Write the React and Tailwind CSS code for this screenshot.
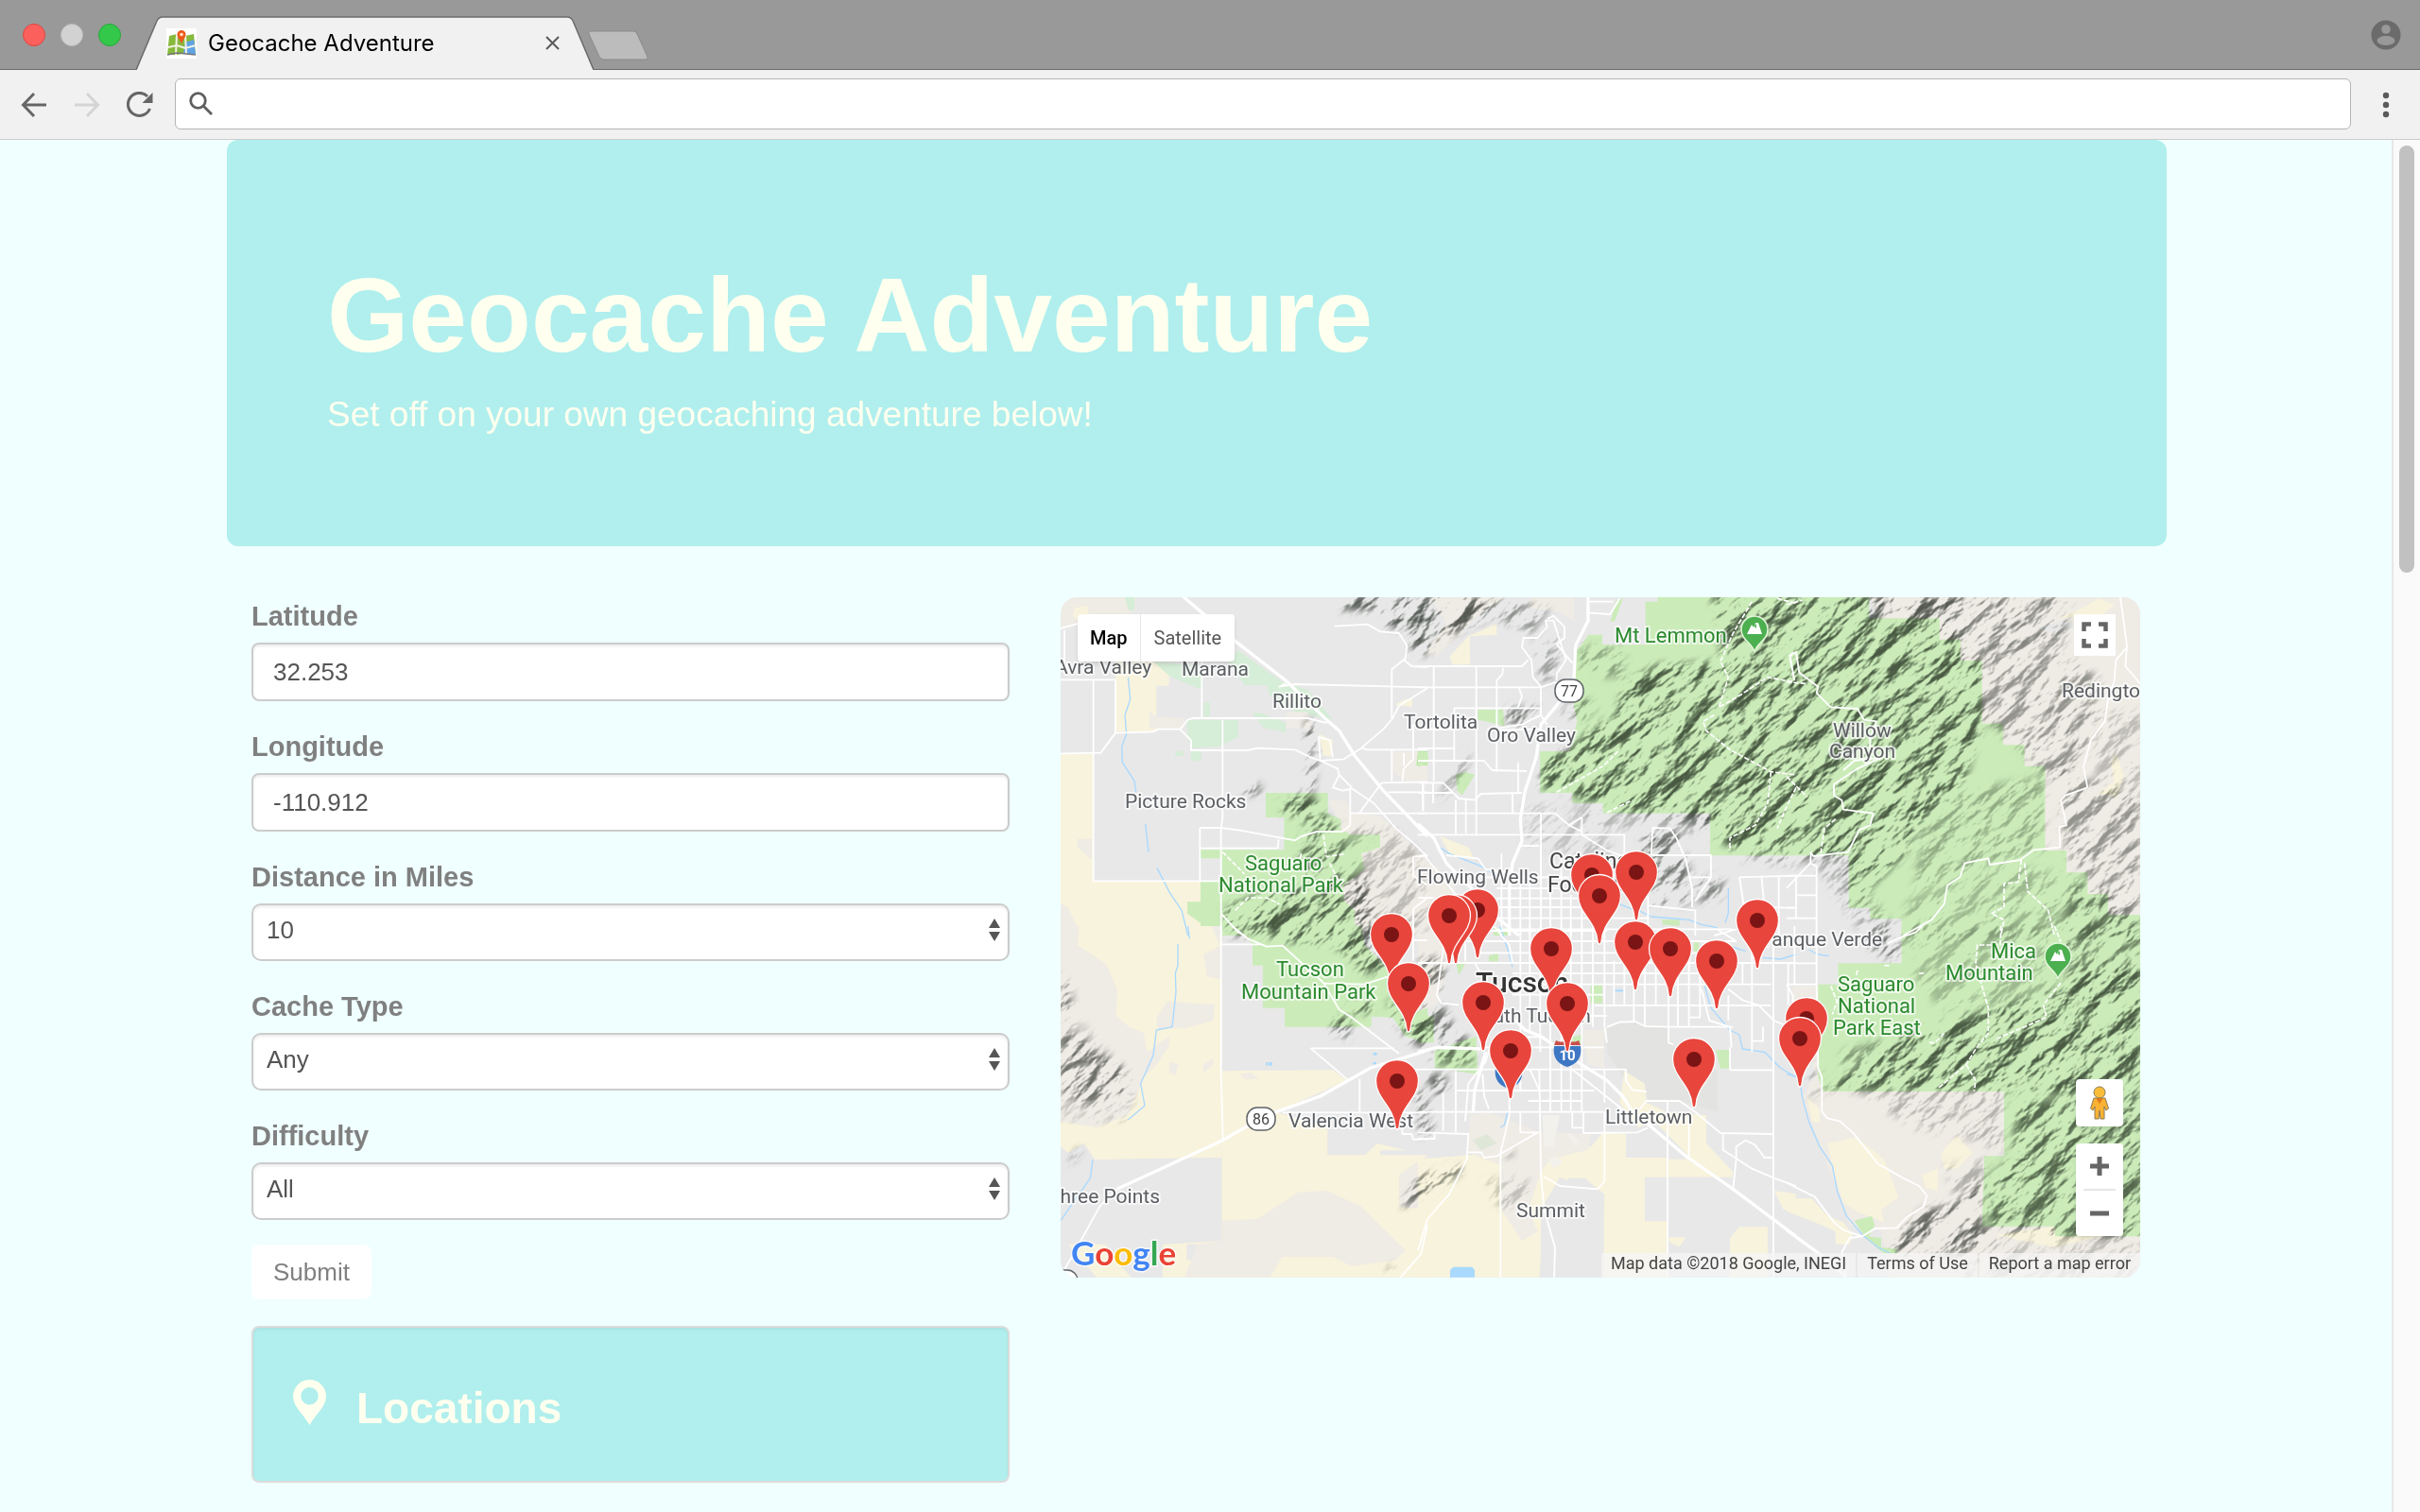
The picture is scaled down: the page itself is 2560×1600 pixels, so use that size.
import React from "react";

const GREY = "#e8e8e8";
const SAND = "#efebe5";
const CROP = "#f8f3dc";
const PARK = "#cbecb9";
const LEAF = "#d6edd7";
const LAKE = "#a9d9ff";

/* Terrain tiles: each has its own origin on the map and a grid of 3 units per pixel. */
const TILES = [
  {
    x: -12,
    y: -12,
    areas: [
      [SAND, "36,36 275,36 275,80 180,110 36,135"],
      [CROP, "80,70 120,62 125,90 90,110 75,95"],
      [LEAF, "240,36 272,36 270,80 250,75"],
      [CROP, "210,240 335,240 380,275 380,317 340,317 340,462 210,462"],
      [CROP, "36,533 140,533 140,938 480,938 480,1110 36,1110"],
      [SAND, "90,803 135,803 135,870 90,830"],
      [SAND, "36,1010 60,1020 100,1110 36,1110"],
      [SAND, "318,400 340,415 430,420 430,455 318,452"],
      [LEAF, "330,240 480,255 490,325 470,325 380,285"],
      [LEAF, "600,205 740,305 820,330 900,425 780,400 700,350 690,315 620,315 570,240"],
      [LEAF, "435,425 600,425 600,480 540,510 450,515 440,480"],
      [LEAF, "645,405 670,402 750,435 750,465 680,450"],
      [LEAF, "490,370 510,370 510,415 490,415"],
      [LEAF, "400,525 425,525 425,540 400,540"],
      [LEAF, "450,525 482,525 482,555 450,555"],
      [SAND, "752,400 820,400 830,430 830,455 752,450"],
      [CROP, "855,470 900,490 895,540 870,540"],
      [CROP, "1100,375 1130,360 1152,360 1152,383 1100,378"],
      [SAND, "1090,525 1200,525 1200,620 1130,620 1090,590"],
      ["#b9e8a6", "1170,525 1200,525 1200,570 1165,570"],
      [SAND, "884,680 940,680 960,720 1050,730 1200,870 1200,1110 930,1110 925,760"],
      [
        PARK,
        "687,657 884,657 884,723 925,740 925,775 960,790 1050,790 1050,830 990,850 1000,900 935,950 935,1000 970,1030 970,1110 480,1110 480,1070 438,1040 438,1003 480,1003 480,938 545,938 545,865 480,865 480,838 678,838 745,838 745,735 687,735",
      ],
    ],
    hills: [
      [1, "915,30 1210,30 1210,190 1160,190 1130,140 1070,125 1060,80 920,75"],
      [0.8, "1140,150 1210,170 1210,220 1150,215"],
      [1, "812,428 850,428 848,560 835,660 800,630 828,580"],
      [1, "615,645 670,625 668,660 620,662"],
      [1, "730,670 830,660 870,720 925,790 925,800 830,750 740,720"],
      [0.8, "800,760 920,770 960,860 930,950 860,960 790,880"],
      [1, "560,1110 560,1020 650,985 740,960 860,950 1010,910 1040,1110"],
      [0.35, "930,760 1100,770 1200,880 1200,1110 970,1110"],
    ],
    roads: [
      "36,298 210,298", "140,298 140,937 545,937", "210,298 210,465",
      "36,532 163,530 210,467 330,463 345,455 415,455 440,425 455,420 820,420 880,435",
      "415,455 450,490 450,522 630,522 660,515 780,520 830,545 860,555 935,550 990,515 1060,455 1090,420 1110,380 1200,325",
      "484,240 484,420", "550,425 550,735 545,770 545,1110",
      "478,768 545,768 600,775 780,808 800,795 850,780 930,780 955,760 955,645 930,650 900,640 920,600 915,580 860,555 855,480 890,490 900,545",
      "478,768 478,937", "478,833 725,833 728,805", "750,310 730,320 780,312 1200,322",
      "905,128 1010,122 1050,145 1110,150 1135,190 1130,230 1087,265 1087,420",
      "1125,235 1150,255 1200,258", "990,515 1010,520 1200,520", "1087,520 1087,620",
      "1155,440 1155,550 1125,580 1120,620", "1125,530 1125,570", "955,722 1200,722", "985,720 1055,625 1200,622",
      "1075,655 1200,655", "955,640 1030,690 1100,770 1160,820 1200,860", "920,600 960,640",
      "1187,625 1187,715", "1155,860 1155,920 1200,950", "1200,990 1155,1025 1155,1110", "48,140 48,240",
      "36,135 90,120", "545,1040 600,1100 620,1110", "1155,860 1200,855",
    ],
    highways: ["420,30 520,115 590,175 750,300 880,425 920,460 970,540 1060,650 1200,795"],
    trails: ["550,845 620,915", "590,1030 630,990 690,990 730,1010", "870,790 880,860 940,850", "890,880 920,940", "800,850 790,880"],
    rivers: ["250,290 257,360 240,410 245,470 230,510 232,560 270,620 275,655", "305,755 315,845", "342,895 380,970 420,1030 440,1110"],
  },
  {
    x: 378,
    y: -12,
    areas: [
      [SAND, "40,36 270,36 250,60 180,100 130,160 60,220 20,220 90,120"],
      [CROP, "100,225 160,160 250,120 250,155 165,160 165,250 110,250"],
      [SAND, "360,36 495,36 495,110 440,80 350,70"],
      [
        PARK,
        "722,50 760,50 760,36 1200,36 1200,856 927,856 927,722 587,722 587,690 490,690 490,657 387,657 387,525 480,525 505,430 495,380 495,210 520,187 540,155 585,155 585,187 722,187",
      ],
      [PARK, "630,45 650,40 625,110 610,115"],
      [PARK, "190,393 270,393 275,445 215,430 190,425"],
      [PARK, "120,600 150,590 180,600 140,665 125,650"],
      [PARK, "0,528 30,528 35,560 0,575"],
      [CROP, "70,795 160,830 180,870 100,850"],
      [SAND, "0,870 60,890 120,960 0,1110"],
      [PARK, "775,1060 830,1060 830,1080 775,1075"],
      [PARK, "240,1085 300,1090 290,1110 240,1110"],
    ],
    hills: [
      [1, "-10,30 200,30 250,90 140,140 60,180 20,210 -10,150"],
      [0.6, "180,30 420,70 360,150 240,100"],
      [0.5, "370,150 450,160 440,290 390,310"],
      [0.5, "510,190 660,195 650,290 520,290"],
      [0.7, "450,400 520,350 570,380 520,430"],
      [0.8, "280,385 390,385 370,440 280,445"],
      [1, "660,300 760,250 960,240 960,150 930,30 1210,30 1210,860 1000,840 900,760 700,720 560,690 480,660 390,640 390,540 480,520 560,440 620,420"],
      [0.35, "490,690 900,720 920,800 700,770 560,770"],
      [0.8, "720,780 830,780 870,930 860,1010 740,1010 680,900"],
      [0.7, "890,930 970,920 970,990 890,1010"],
      [0.25, "330,680 580,730 640,900 340,820"],
      [0.5, "120,550 165,520 150,600 60,690"],
      [0.5, "1010,840 1210,850 1210,890 1020,870"],
    ],
    roads: [
      "0,255 330,255 350,235", "0,322 390,322 440,305", "115,388 390,388", "50,255 50,620", "0,516 115,516",
      "115,388 115,555", "0,455 110,455", "0,555 210,555 235,585 345,588", "185,255 185,715", "270,260 268,280 250,300 250,590",
      "0,625 80,625 130,675 180,680 200,660 330,657", "0,657 110,657", "0,722 435,722 480,760 520,735",
      "0,790 655,790 655,860", "120,680 120,790", "152,680 152,785", "185,715 185,790", "318,560 318,657",
      "300,657 300,722", "15,625 15,715", "48,625 48,690",
      "440,300 440,280 470,235 430,110 405,110 410,130 380,165 335,165 330,195 360,235 365,290 390,320",
      "410,105 430,95 465,130 465,165 440,185 490,245", "545,50 620,50", "540,85 610,90 640,40",
      "220,457 330,440 390,410 410,440", "390,322 390,410", "250,457 390,455", "320,322 330,350 318,385", "90,855 190,865 215,900 290,910",
      "325,825 385,825", "390,722 390,1110", "520,735 520,790 600,840 655,860", "480,760 520,780",
      "655,860 655,960 730,985", "740,855 745,768 800,770 820,800 850,870 870,960 870,1020", "740,855 930,855 930,925 860,925",
      "1020,925 1200,920", "1020,925 1035,1020 1200,1022", "1090,920 1100,1020", "1145,920 1145,1110", "730,985 730,1110",
      "880,1110 880,1030 730,1015", "880,1000 930,925", "250,1020 600,1020", "250,992 600,992", "250,1055 730,1055", "250,960 450,960",
      "200,925 480,925", "325,950 325,1110", "355,920 355,1110", "420,950 420,1110", "455,860 455,1110", "485,980 485,1110",
      "520,980 520,1110", "250,1090 1000,1090", "1010,1090 940,1110", "0,860 20,855 200,1080", "265,850 265,1110", "0,990 50,990",
    ],
    highways: [
      "540,30 540,110 500,190 495,300 440,380 390,440 375,545 340,650 325,740 330,810 300,880 290,960 290,1110",
      "0,755 50,800 90,880 200,990 260,1060 320,1110",
    ],
    trails: [
      "1060,50 1000,150 960,240 985,290 955,385 1010,355 1110,290 1190,305", "940,410 905,430 915,460 990,520 1120,590 1200,600",
      "1120,590 1110,690 1070,760 990,800 990,840", "440,655 520,610 590,570 640,520", "600,720 680,680",
      "1200,640 1170,700 1140,770", "1190,210 1180,230 1195,300", "1140,40 1200,55",
    ],
    rivers: ["60,825 100,850 200,890 250,920", "700,1030 740,1050 860,1060 900,1075 950,1085", "985,960 985,1040 975,1070", "640,1010 700,1035"],
  },
  {
    x: 768,
    y: -12,
    areas: [
      [SAND, "262,36 1122,36 1122,1110 800,1110 600,840 400,300"],
      [CROP, "870,100 940,70 990,40 1040,60 990,100"],
      [CROP, "1030,560 1045,530 1070,600 1050,670 990,660 1040,620"],
      [GREY, "790,135 880,110 930,130 850,150"],
      [
        PARK,
        "0,36 262,36 262,103 485,103 485,170 552,170 552,237 620,237 620,437 687,437 687,505 755,505 755,572 820,572 820,840 888,840 888,910 955,910 955,978 1020,978 1020,1045 1122,1045 1122,1110 365,1110 365,1057 265,1057 265,1022 197,1022 197,856 0,856",
      ],
    ],
    hills: [
      [1, "-10,30 560,30 560,170 620,250 620,440 560,640 430,740 380,850 200,1020 190,860 -10,860"],
      [0.7, "250,30 900,30 880,190 640,200 500,160"],
      [0.6, "540,180 860,200 1000,300 960,500 900,640 820,600 690,480 620,420"],
      [0.45, "430,740 560,650 820,600 820,840 640,880 400,980"],
      [0.6, "850,570 1122,680 1122,1045 1020,1000 890,860 860,700"],
      [0.35, "980,400 1130,400 1130,700 980,640"],
      [0.35, "380,1000 700,880 900,920 1130,1060 1130,1120 370,1120"],
      [0.7, "900,930 1060,1000 1120,1060 1120,1120 880,1120"],
      [0.4, "0,850 190,860 360,1110 240,1110 100,900"],
    ],
    roads: [
      "1058,30 1068,100 1080,190 1075,255 1122,310",
      "1080,195 1045,235 1040,300 1020,360 1010,430 965,490 942,575 955,640 885,665 870,680 888,760 865,765 868,830 785,838 740,870 645,885 640,865 565,880 550,925 510,950 500,1010 460,1060 370,1110",
      "25,300 10,220 30,210 40,275 100,320 95,340 140,385 225,390 245,425 285,430 265,480 265,520",
      "180,585 215,555 300,545 225,580 150,630 150,665 175,680 180,710 275,722 265,760 230,775 195,845 85,858 75,845",
      "0,920 95,920", "30,925 30,1055", "30,982 95,982", "0,1022 28,1022", "0,1055 95,1055", "78,845 75,880 95,890 95,1110", "0,960 75,880",
    ],
    highways: [],
    trails: [
      "0,305 60,310", "155,740 120,770 108,850", "745,870 735,940 690,945 690,1020 650,1040 690,1060 680,1110",
      "755,880 765,970 830,1030 850,1110", "0,605 65,670", "0,60 50,45",
    ],
    rivers: [],
  },
  {
    x: -12,
    y: 348,
    areas: [
      [CROP, "36,0 548,0 548,735 145,742 36,740"],
      [SAND, "36,0 95,0 90,60 180,120 215,200 212,285 265,330 260,400 300,480 250,600 150,640 36,620"],
      [SAND, "340,290 375,240 525,250 520,300 430,325 345,325"],
      [SAND, "260,320 300,340 310,400 380,350 380,380 340,440 290,490 250,440"],
      [SAND, "490,90 548,60 548,170 500,160"],
      [SAND, "515,0 548,0 540,60"],
      [SAND, "380,430 410,440 400,475 380,465"],
      [SAND, "490,440 520,420 520,440 490,465"],
      [GREY, "36,700 60,720 110,690 145,742 548,735 548,1010 36,1010"],
      [CROP, "60,1010 180,1010 200,1050 260,1115 150,1115"],
      [CROP, "548,460 900,457 945,490 720,590 883,640 883,727 1002,727 1040,690 1200,727 1200,1115 360,1115 360,1010 548,1000"],
      [GREY, "436,1010 468,1010 468,1060 436,1060"],
      [SAND, "548,935 660,930 790,845 880,840 990,890 1060,960 1130,1030 1100,1060 960,1080 900,1050 740,1050 700,1115 430,1115 470,1010 548,1000"],
      [SAND, "1110,790 1200,727 1200,900 1110,890"],
      [SAND, "605,470 640,465 665,485 620,485"],
      [PARK, "555,0 990,0 1000,60 1070,130 1120,190 1200,260 1200,370 1130,350 1090,290 1022,287 1022,320 747,320 747,260 678,260 678,125 645,125 645,57 610,20"],
      [LAKE, "688,432 694,432 694,443 688,443"],
      [LAKE, "697,432 707,432 707,443 697,443"],
      [LAKE, "1028,402 1040,402 1040,410 1028,410"],
      [LAKE, "1028,432 1038,432 1038,439 1028,439"],
      [GREY, "1050,712 1200,712 1200,727 1050,727"],
    ],
    hills: [
      [0.8, "30,340 100,350 150,400 240,450 265,560 200,540 130,570 60,540 30,520"],
      [0.8, "30,150 70,180 75,300 30,290"],
      [0.25, "30,300 100,300 260,480 260,620 30,620"],
      [1, "640,0 1010,0 1060,110 980,120 900,60 740,50"],
      [1, "900,290 960,280 950,360 900,340"],
      [1, "960,240 1025,230 1020,280 950,270"],
      [1, "1070,230 1120,260 1200,280 1200,380 1150,370 1100,310"],
      [0.9, "950,50 1030,60 1080,150 980,150"],
      [1, "1120,900 1200,850 1200,770 1140,840"],
      [0.8, "65,765 80,710 105,710"],
      [0.9, "1165,520 1200,530 1200,680 1180,660"],
      [0.5, "1060,1080 1090,1070 1090,1095 1070,1095"],
    ],
    roads: [
      "545,0 545,460 551,680", "548,58 670,58", "580,0 630,40 690,65 740,62 870,180 920,265 960,290 1110,405", "830,388 1095,388",
      "830,388 950,490", "985,485 985,590", "740,592 1200,592", "215,835 160,890 105,990 60,1070 36,1110",
      "1200,950 1180,1040 1115,1115", "870,182 1000,185 1075,160", "1155,0 1155,110", "1155,45 1200,45", "1120,660 1150,660 1155,677 1200,677",
      "1155,455 1200,455", "1120,610 1120,660",
    ],
    highways: ["1200,395 1020,450 860,540 720,590 620,640 550,680 410,745 215,835"],
    trails: [],
    rivers: ["440,0 445,40", "408,58 408,125 400,150 402,210 390,320 340,330 330,410 290,500 303,570 250,615", "138,742 130,800 36,935"],
  },
  {
    x: 378,
    y: 348,
    areas: [
      [SAND, "0,0 90,0 100,90 60,250 0,270"],
      ["#e3e3e1", "600,330 640,305 690,305 720,320 795,320 795,370 830,400 950,460 950,590 830,555 730,555 720,515 650,480 600,400"],
      [SAND, "520,330 592,330 592,450 540,440"],
      [CROP, "655,460 720,500 725,560 790,590 915,600 915,690 1000,780 1000,830 870,740 750,620 700,640 640,560"],
      [CROP, "0,740 160,727 265,727 265,1115 0,1115"],
      [CROP, "265,727 400,690 550,700 590,650 660,660 660,735 790,735 790,1115 590,1115 590,850 530,800 480,800 400,900 385,1115 265,1115"],
      [CROP, "790,740 860,740 1000,830 980,797 790,797"],
      [SAND, "165,600 220,590 390,655 550,660 540,710 420,740 390,780 350,900 380,970 330,1000 265,900 265,760 160,720"],
      ["#f3f1ec", "395,600 450,600 430,700 400,700"],
      ["#f3f1ec", "470,650 510,680 500,700"],
      ["#f3f1ec", "415,740 440,730 460,750 430,770"],
      ["#dfe7d9", "175,680 220,660 250,690 200,712"],
      [GREY, "720,797 1125,797 1125,1115 790,1115 790,937 720,937"],
      [GREY, "390,900 450,797 590,850 590,1115 390,1115"],
      [CROP, "990,990 1020,955 1110,955 1110,1115 990,1115"],
      [CROP, "795,988 850,988 830,1018 800,1005"],
      [CROP, "1130,840 1200,850 1190,905 1160,900"],
      [PARK, "53,395 185,350 190,470 53,450"],
      [PARK, "0,270 50,290 50,370 0,370"],
      [PARK, "548,187 585,187 585,245 548,245"],
      [PARK, "945,393 990,393 990,452 960,452"],
      [PARK, "120,120 150,120 130,155"],
      [PARK, "490,350 520,345 520,375 490,375"],
      [PARK, "225,95 255,85 255,112 225,112"],
      [PARK, "875,52 892,52 892,80 875,80"],
      [LAKE, "102,1092 112,1082 172,1082 180,1092 180,1115 102,1115"],
      [LAKE, "626,202 652,202 652,208 626,208"],
    ],
    hills: [
      [0.8, "0,100 70,100 90,160 60,220 120,330 190,380 170,440 60,440 0,380"],
      [1, "0,815 60,780 130,755 140,780 60,830 0,860"],
      [0.9, "20,470 90,470 95,545 50,530"],
      [0.8, "0,600 50,620 40,670 10,660"],
      [0.7, "265,715 300,705 300,730 270,730"],
      [0.3, "200,800 350,800 350,900 260,900"],
    ],
    roads: [
      "150,15 600,15", "150,48 1010,48", "190,85 1000,85", "0,117 1200,117", "300,150 900,150", "270,185 1120,185", "300,218 590,218",
      "560,252 1120,252", "520,285 600,285", "795,320 1000,320", "300,352 400,352", "200,385 590,385", "325,0 325,350", "355,0 355,340",
      "388,0 388,400", "420,0 420,590", "455,0 455,590", "485,0 485,590", "520,0 520,590", "555,0 555,320", "592,0 592,320 600,370",
      "622,110 622,250", "655,0 655,250", "685,117 685,300", "720,0 720,315", "755,110 755,252", "795,117 795,370 810,375", "825,117 825,320",
      "860,50 860,320", "895,117 895,290 860,290", "1030,117 1030,185", "1060,85 1060,400", "1175,117 1175,250",
      "0,590 590,590", "20,455 660,455 660,490 680,520 725,525", "120,522 560,522", "350,555 520,555", "120,460 120,655",
      "80,530 80,650", "0,655 160,660 155,740 100,850 30,930 0,1030", "53,660 53,675 0,675", "150,620 160,500 215,430 230,380",
      "290,550 290,600 262,720 262,1115", "385,455 390,780 400,900 435,1020 432,1115", "160,718 200,718 210,735 250,730 380,655", "325,590 325,655 385,655",
      "490,590 490,640 525,640", "525,590 525,657 695,655 730,640", "592,590 592,810 570,835 450,825 400,795", "592,455 592,560",
      "355,455 385,520", "325,455 325,520", "205,470 210,540 225,580", "792,680 792,1115", "1128,0 1128,1115",
      "490,455 660,590 700,585 725,555 830,555 880,590 960,657 1125,660", "860,600 860,735", "792,555 792,680",
      "968,660 968,710 1060,770 1130,800 1200,825", "1000,835 1010,740 1010,700 1040,680 1070,695 1100,735 1128,735",
      "985,200 1030,235 1080,250 1130,300 1200,330", "990,457 1128,457", "990,385 990,457", "1095,320 1095,365 1060,365", "90,0 60,220 75,245 130,250",
      "240,0 290,60 300,117", "600,320 640,305 690,303 720,318 795,320", "900,200 925,300 990,320 995,385", "950,10 1010,48", "985,220 985,300",
      "180,117 230,200", "150,20 150,110",
    ],
    highways: [
      "270,260 340,330 390,350 520,440 600,490 650,540 680,590 720,620 850,730 1000,835 1200,985",
      "0,400 60,385 210,390", "215,400 180,520 175,590",
    ],
    trails: [],
    rivers: [
      "930,260 990,330 1020,345 1030,390 1100,400 1150,450 1200,480", "910,190 930,260", "260,0 290,90 300,130", "285,590 275,630 262,640",
      "1095,100 1150,105 1200,90", "980,60 1040,80",
    ],
  },
  {
    x: 768,
    y: 348,
    areas: [
      [SAND, "20,190 100,190 115,525 690,525 690,730 628,730 620,953 852,953 852,985 1122,985 1122,1115 330,1115 300,960 200,950 50,545 90,470 20,250"],
      [CROP, "130,690 220,670 310,740 355,860 300,900 310,940 230,910 180,880 150,780"],
      [CROP, "490,720 540,665 590,720 540,770 500,770"],
      [CROP, "430,790 480,770 480,840 440,830"],
      [CROP, "660,980 850,953 1000,985 850,1020"],
      [CROP, "65,545 105,580 105,625 80,620"],
      [CROP, "0,865 80,865 130,920 180,940 210,980 200,1010 155,1010 155,970 100,945 0,905"],
      [PARK, "365,0 1122,0 1122,985 852,985 852,953 620,953 628,730 690,730 690,525 115,525 100,480 100,185 163,185 163,118 365,118"],
      [PARK, "215,935 270,920 280,950 260,985 300,990 300,1020 350,1025 350,1040 310,1040 250,990"],
    ],
    hills: [
      [0.8, "280,0 370,0 360,120 240,60"],
      [0.35, "370,0 900,0 850,300 500,280 400,150"],
      [1, "110,520 250,430 400,330 640,270 870,200 960,130 1130,100 1130,500 960,540 690,525"],
      [0.7, "850,0 1130,0 1130,140 900,200"],
      [0.9, "720,560 1130,520 1130,990 850,985 640,940 640,800 720,730"],
      [0.4, "230,530 690,530 690,720 600,680 400,640"],
      [0.6, "170,400 400,330 300,430 170,440"],
      [0.9, "430,900 540,880 620,800 620,953 780,960 620,1010 560,1040 330,1040 350,980"],
      [0.4, "500,760 640,740 620,860 540,880"],
      [0.3, "560,1000 1130,990 1130,1120 560,1120"],
      [0.3, "60,440 110,430 110,540 60,540"],
    ],
    roads: [
      "95,0 95,185 100,450 112,480 112,590 130,610 170,620 210,655 290,755 370,800 420,825 445,855 435,890 380,925 350,958 280,960 240,985 180,965 150,940 90,860 0,815",
      "0,118 95,118", "25,0 25,185", "0,185 95,185", "190,1115 175,1035 200,990 240,985", "320,55 365,35 410,20 430,0", "0,185 20,220 20,260",
    ],
    highways: ["0,965 110,1045 190,1115"],
    trails: [
      "650,60 605,60 600,120 640,260 640,340 600,390 570,440 480,515", "870,180 815,250 825,290 660,360", "570,440 600,490 595,525",
      "680,0 678,60", "850,0 870,50", "225,140 220,160", "500,340 470,370 450,370", "310,125 330,125", "140,190 160,240 145,280", "420,150 440,150",
    ],
    rivers: [
      "0,470 40,480 50,545 70,620 105,700 145,760 160,840 190,920 240,980 290,1020 330,1040", "70,75 100,90 135,95",
    ],
  },
];

const PLACES = [
  ["Avra Valley", -6, 81],
  ["Marana", 128, 83],
  ["Rillito", 224, 117],
  ["Tortolita", 363, 139],
  ["Oro Valley", 451, 153],
  ["Picture Rocks", 68, 223],
  ["Flowing Wells", 377, 303],
  ["Willow", 817, 148],
  ["Canyon", 813, 170],
  ["Redington", 1059, 106],
  ["Tanque Verde", 741, 369],
  ["South Tucson", 433, 450],
  ["Valencia West", 241, 561],
  ["Littletown", 576, 557],
  ["Three Points", -13, 641],
  ["Summit", 482, 656],
];

const PARKS = [
  ["Saguaro", 195, 289],
  ["National Park", 167, 312],
  ["Tucson", 228, 401],
  ["Mountain Park", 191, 425],
  ["Mt Lemmon", 586, 48],
  ["Mica", 984, 382],
  ["Mountain", 936, 405],
  ["Saguaro", 822, 417],
  ["National", 822, 440],
  ["Park East", 817, 463],
];

const PINS = [
  [609, 291], [562, 294], [570, 316], [441, 331], [418, 337], [411, 337], [737, 342], [350, 357], [608, 365],
  [519, 372], [645, 372], [694, 385], [368, 409], [447, 429], [536, 430], [789, 446], [782, 467], [476, 480],
  [670, 489], [356, 512],
];

const Lines = ({ items, ...rest }) =>
  items.map((p) => <polyline key={p} points={p} fill="none" strokeLinejoin="round" {...rest} />);

function Peak({ x, y }) {
  return (
    <g transform={`translate(${x} ${y})`}>
      <path d="M0 24C-2 14-14 12-14 0A14 14 0 0 1 14 0C14 12 2 14 0 24Z" fill="#4caf50" stroke="#e3f5da" strokeWidth="1.5" />
      <path d="M-8 5-3-5-1-2 1-7 4-7 8 5Z" fill="#fff" />
      <path d="M1-7 0-3 2-1 2-4Z" fill="#4caf50" />
    </g>
  );
}

function RouteSign({ x, y, n }) {
  return (
    <g transform={`translate(${x} ${y})`}>
      <rect x="-15" y="-12" width="30" height="24" rx="11" fill="#fff" stroke="#5f6368" strokeWidth="1.5" />
      <text y="6" textAnchor="middle" fontSize="16" fill="#444">{n}</text>
    </g>
  );
}

function Interstate({ x, y }) {
  return (
    <g transform={`translate(${x} ${y})`}>
      <path d="M-12-14Q-6-11 0-14Q6-11 12-14L14-9H-14Z" fill="#c8504c" />
      <path d="M-14-8H14C16 4 10 11 0 14C-10 11-16 4-14-8Z" fill="#3e78c4" />
      <text y="7" textAnchor="middle" fontSize="15" fontWeight="700" fill="#fff">10</text>
    </g>
  );
}

function Pin({ x, y }) {
  return (
    <g transform={`translate(${x} ${y})`}>
      <path
        d="M0 51C-1.6 51-1.9 50-2 48C-3.5 27-22.500 18-22.500 0A22.500 22.500 0 0 1 22.500 0C22.500 18 3.500 27 2 48C1.900 50 1.600 51 0 51Z"
        fill="#e8453c"
        stroke="#fff"
        strokeWidth="1.3"
      />
      <circle r="8" fill="#7b1414" />
    </g>
  );
}

function Terrain() {
  return (
    <svg viewBox="0 0 1142 720" preserveAspectRatio="xMidYMid slice" className="absolute inset-0 h-full w-full" role="img" aria-label="Map of Tucson">
      <defs>
        <filter id="shade" x="0" y="0" width="100%" height="100%" colorInterpolationFilters="sRGB">
          <feTurbulence type="fractalNoise" baseFrequency="0.018 0.042" numOctaves="5" seed="11" />
          <feDiffuseLighting surfaceScale="15" diffuseConstant="1.3" lightingColor="#fff">
            <feDistantLight azimuth="265" elevation="50" />
          </feDiffuseLighting>
          <feComponentTransfer>
            <feFuncR type="table" tableValues="0.36 0.46 0.6 0.8 1" />
            <feFuncG type="table" tableValues="0.38 0.48 0.62 0.81 1" />
            <feFuncB type="table" tableValues="0.36 0.46 0.6 0.8 1" />
          </feComponentTransfer>
        </filter>
        <filter id="soft" x="-5%" y="-5%" width="110%" height="110%">
          <feGaussianBlur stdDeviation="4" />
        </filter>
        <mask id="relief" maskUnits="userSpaceOnUse" x="0" y="0" width="1142" height="720">
          <g filter="url(#soft)">
            {TILES.map((t) => (
              <g key={`${t.x} ${t.y}`} transform={`translate(${t.x} ${t.y}) scale(0.33333)`}>
                {t.hills.map(([o, p]) => <polygon key={p} points={p} fill="#fff" fillOpacity={o} />)}
              </g>
            ))}
          </g>
        </mask>
      </defs>
      <rect width="1142" height="720" fill={GREY} />
      {TILES.map((t) => (
        <g key={`${t.x} ${t.y}`} transform={`translate(${t.x} ${t.y}) scale(0.33333)`}>
          {t.areas.map(([c, p]) => <polygon key={p} points={p} fill={c} />)}
        </g>
      ))}
      <g mask="url(#relief)" style={{ mixBlendMode: "multiply" }}>
        <g transform="rotate(-42 571 360)">
          <rect x="-200" y="-400" width="1550" height="1500" filter="url(#shade)" />
        </g>
      </g>
      {TILES.map((t) => (
        <g key={`${t.x} ${t.y}`} transform={`translate(${t.x} ${t.y}) scale(0.33333)`}>
          <Lines items={t.rivers} stroke={LAKE} strokeWidth="4" />
          <Lines items={t.roads} stroke="#fff" strokeWidth="5.500" />
          <Lines items={t.trails} stroke="#fff" strokeWidth="5" strokeDasharray="16 6" />
          <Lines items={t.highways} stroke="#fff" strokeWidth="10" />
        </g>
      ))}
      <g fontFamily="Roboto, sans-serif" stroke="none">
        <RouteSign x={538} y={99} n="77" />
        <RouteSign x={212} y={552} n="86" />
        <RouteSign x={3} y={724} n="" />
        <Interstate x={536} y={483} />
        <Interstate x={474} y={506} />
        <g fontSize="21" fill="#5b5e62" stroke="#fff" strokeOpacity="0.7" strokeWidth="4" strokeLinejoin="round" paintOrder="stroke">
          {PLACES.map(([n, x, y]) => <text key={n} x={x} y={y}>{n}</text>)}
          <g fill="#444">
            <text x="517" y="287" fontSize="23">Catalina</text>
            <text x="515" y="312" fontSize="23">Foothills</text>
          </g>
          <g fill="#2b8a2f" fontSize="22">
            {PARKS.map(([n, x, y]) => <text key={`${n}${y}`} x={x} y={y}>{n}</text>)}
          </g>
          <text x="439" y="418" fontSize="30" fontWeight="500" fill="#333">Tucson</text>
        </g>
        <Peak x={734} y={34} />
        <Peak x={1055} y={380} />
      </g>
      {PINS.map(([x, y]) => <Pin key={`${x} ${y}`} x={x} y={y} />)}
    </svg>
  );
}

function MapPanel() {
  const footer = "flex h-full items-center bg-[#f5f5f5]/75 px-2.5 pb-1 text-[#444]";
  return (
    <section aria-label="Map" className="relative aspect-[1142/720] w-full overflow-hidden rounded-[18px] font-[Roboto,sans-serif]">
      <Terrain />
      <div className="absolute top-[18px] left-[18px] flex h-[50px] rounded-sm bg-white text-xl shadow-md">
        <button className="border-r border-gray-200 px-[13px] font-medium text-black">Map</button>
        <button className="px-[14px] text-[#565656]">Satellite</button>
      </div>
      <button aria-label="Toggle fullscreen view" className="absolute top-[18px] right-[26px] grid h-11 w-11 place-items-center bg-white">
        <svg width="28" height="28" viewBox="0 0 28 28" fill="none" stroke="#666" strokeWidth="4.500">
          <path d="M2.500 10V2.500H10M18 2.500H25.500V10M25.500 18V25.500H18M10 25.500H2.500V18" />
        </svg>
      </button>
      <div className="absolute right-[18px] bottom-11 flex w-[50px] flex-col gap-[18px]">
        <button aria-label="Street View" className="grid h-[50px] place-items-center rounded-sm bg-white shadow-md">
          <svg width="22" height="36" viewBox="0 0 22 36" stroke="#8a7a55" strokeWidth="1">
            <path d="M5 13H17L20.500 24 18 26 16 22V35H12L11 26 10 35H6V22L4 26 1.500 24Z" fill="#f9b233" />
            <path d="M7 13H15L11 19Z" fill="#e27a1e" stroke="none" />
            <circle cx="11" cy="7" r="6" fill="#f9bd3a" />
          </svg>
        </button>
        <div className="flex flex-col items-center rounded-sm bg-white shadow-md">
          <button aria-label="Zoom in" className="grid h-12 w-full place-items-center">
            <svg width="20" height="20" viewBox="0 0 20 20" stroke="#666" strokeWidth="5"><path d="M0 10H20M10 0V20" /></svg>
          </button>
          <div className="h-0.5 w-[34px] bg-[#e6e6e6]" />
          <button aria-label="Zoom out" className="grid h-12 w-full place-items-center">
            <svg width="20" height="20" viewBox="0 0 20 20" stroke="#666" strokeWidth="5"><path d="M0 10H20" /></svg>
          </button>
        </div>
      </div>
      <a href="#google" aria-label="Google" className="absolute bottom-0.5 left-[11px] font-[Lato,sans-serif] text-[35px] leading-[50px] font-bold [paint-order:stroke] [-webkit-text-stroke:3px_rgba(255,255,255,0.7)]">
        <span className="text-[#4285f4]">G</span>
        <span className="text-[#ea4335]">o</span>
        <span className="text-[#fbbc05]">o</span>
        <span className="text-[#4285f4]">g</span>
        <span className="text-[#34a853]">l</span>
        <span className="text-[#ea4335]">e</span>
      </a>
      <div className="absolute right-0 bottom-0 flex h-[26px] gap-0.5 text-lg whitespace-nowrap">
        <span className={footer}>Map data ©2018 Google, INEGI</span>
        <a href="#terms" className={footer}>Terms of Use</a>
        <a href="#report" className={footer}>Report a map error</a>
      </div>
    </section>
  );
}

function Browser() {
  return (
    <header className="shrink-0">
      <div className="flex h-[74px] items-end border-b border-[#6b6b6b] bg-[#999]">
        <div className="flex h-full w-[144px] shrink-0 items-center gap-4 pl-6">
          <button aria-label="Close window" className="h-6 w-6 rounded-full border border-[#e0443e] bg-[#fc605c]" />
          <button aria-label="Minimize window" className="h-6 w-6 rounded-full border border-[#bdbdbd] bg-[#d2d2d2]" />
          <button aria-label="Zoom window" className="h-6 w-6 rounded-full border border-[#27a93a] bg-[#34c84a]" />
        </div>
        <div className="relative -mb-px flex h-[57px] w-[484px] shrink-0 items-center px-8">
          <svg className="absolute inset-0 h-full w-full" viewBox="0 0 484 57" preserveAspectRatio="none" aria-hidden="true">
            <path d="M0 57 22 5Q24 1 28 1H456Q460 1 462 5L484 57Z" fill="#f1f1f1" stroke="#6b6b6b" strokeWidth="1.500" />
            <path d="M1 57H483" stroke="#f1f1f1" strokeWidth="2" />
          </svg>
          <svg className="relative" width="32" height="32" viewBox="0 0 32 32" aria-hidden="true">
            <rect width="32" height="32" fill="#fff" />
            <path d="M3 8 11 6 20 8 29 6 31 28 21 26 11 28 1 28Z" fill="#86b93c" />
            <path d="M20 15 29 12 31 28 18 26Z" fill="#5fa3e6" />
            <path d="M11 6 10 28M20 7 21 27M2 20 11 18 20 21 31 18" stroke="#f3f3e8" strokeWidth="2" fill="none" />
            <path d="M1 28 11 26 21 27 31 28" stroke="#777" strokeWidth="1.500" fill="none" />
            <path d="M16 17C15 12 11.500 10 11.500 6.500A4.500 4.500 0 0 1 20.500 6.500C20.500 10 17 12 16 17Z" fill="#ee5a1c" />
            <circle cx="16" cy="6.500" r="1.800" fill="#ffe2cf" />
          </svg>
          <span className="relative ml-3 flex-1 font-[Inter,sans-serif] text-2xl whitespace-nowrap text-black">Geocache Adventure</span>
          <button aria-label="Close tab" className="relative grid h-6 w-6 place-items-center">
            <svg width="15" height="15" viewBox="0 0 15 15" stroke="#5a5a5a" strokeWidth="2"><path d="M1 1 14 14M14 1 1 14" /></svg>
          </button>
        </div>
        <button aria-label="New tab" className="-ml-2 self-start pt-8">
          <svg width="68" height="34" viewBox="0 0 68 34">
            <path d="M4 1H50Q53 1 54 4L65 28Q66 31 63 31H19Q16 31 14 28L3 4Q2 1 4 1Z" fill="#bcbcbc" stroke="#8a8a8a" />
          </svg>
        </button>
        <button aria-label="Profile" className="ml-auto self-center pr-5">
          <svg width="32" height="32" viewBox="0 0 32 32">
            <circle cx="16" cy="16" r="15.500" fill="#6b6b6b" />
            <circle cx="16" cy="10" r="4.800" fill="#999" />
            <ellipse cx="16" cy="22" rx="9.500" ry="5" fill="#999" />
          </svg>
        </button>
      </div>
      <div className="flex h-[74px] items-center border-b border-[#ccc] bg-[#f1f1f1] pl-[22px]">
        <div className="flex w-[163px] shrink-0 items-center gap-7">
          <button aria-label="Back">
            <svg width="28" height="28" viewBox="0 0 28 28" fill="none" stroke="#666" strokeWidth="3"><path d="M27 14H3M14 2 2.500 14 14 26" /></svg>
          </button>
          <button aria-label="Forward">
            <svg width="28" height="28" viewBox="0 0 28 28" fill="none" stroke="#d4d4d4" strokeWidth="3"><path d="M1 14H25M14 2 25.500 14 14 26" /></svg>
          </button>
          <button aria-label="Reload">
            <svg width="28" height="28" viewBox="0 0 28 28" fill="none" stroke="#666" strokeWidth="3">
              <path d="M24.500 18A12 12 0 1 1 22 5" />
              <path d="M27.500 1V12H16.500Z" fill="#666" stroke="none" />
            </svg>
          </button>
        </div>
        <label className="-mt-0.5 flex h-[54px] flex-1 items-center rounded-md border border-[#b5b5b5] bg-white pl-[14px]">
          <svg width="26" height="26" viewBox="0 0 26 26" fill="none" stroke="#5f5f5f" strokeWidth="2.800">
            <circle cx="9.500" cy="9.500" r="7.800" />
            <path d="M15 15 24 24" />
          </svg>
          <input aria-label="Address" className="h-full flex-1 bg-transparent pl-3 font-[Inter,sans-serif] text-2xl outline-none" />
        </label>
        <button aria-label="Menu" className="w-[73px] shrink-0 pl-[33px]">
          <svg width="8" height="28" viewBox="0 0 8 28" fill="#5a5a5a"><circle cx="4" cy="4" r="3.200" /><circle cx="4" cy="14" r="3.200" /><circle cx="4" cy="24" r="3.200" /></svg>
        </button>
      </div>
    </header>
  );
}

function TextField({ id, label, value }) {
  return (
    <div className="mb-7">
      <label htmlFor={id} className="mb-2 block text-[29px] leading-10 font-bold text-[#808080]">{label}</label>
      <input id={id} defaultValue={value} className="h-[62px] w-full rounded-lg border-2 border-[#ccc] bg-white px-[21px] text-[26px] text-[#555] shadow-[inset_0_2px_3px_rgba(0,0,0,0.08)]" />
    </div>
  );
}

function SelectField({ id, label, value }) {
  return (
    <div className="mb-7 last-of-type:mb-6">
      <label htmlFor={id} className="mb-2 block text-[29px] leading-10 font-bold text-[#808080]">{label}</label>
      <div className="relative">
        <select id={id} defaultValue={value} className="h-[61px] w-full appearance-none rounded-[10px] border-2 border-[#ccc] bg-white px-[14px] pb-1 text-[26px] text-[#555] shadow-[inset_0_2px_3px_rgba(0,0,0,0.08)]">
          <option>{value}</option>
        </select>
        <svg className="pointer-events-none absolute top-4 right-[10px]" width="12" height="24" viewBox="0 0 12 24" fill="#555" aria-hidden="true">
          <path d="M6 0 12 10H0ZM0 14H12L6 24Z" />
        </svg>
      </div>
    </div>
  );
}

export default function App() {
  return (
    <div className="flex h-screen flex-col overflow-hidden bg-[#f0ffff] font-['Liberation_Sans',Arial,sans-serif]">
      <Browser />
      <div className="flex min-h-0 flex-1">
        <main className="min-w-0 flex-1 overflow-hidden pl-0.5">
          <div className="mx-auto max-w-[2052px]">
            <div className="mb-[54px] rounded-xl bg-[#b0efed] px-[106px] pt-[120px] pb-[108px] text-[#fffff0]">
              <h1 className="text-[111px] leading-[132px] font-bold">Geocache Adventure</h1>
              <p className="mt-2 text-[37px] leading-[62px]">Set off on your own geocaching adventure below!</p>
            </div>
            <div className="grid grid-cols-[802fr_1142fr] items-start gap-[54px] pr-7 pl-[26px]">
              <div>
                <form onSubmit={(e) => e.preventDefault()}>
                  <TextField id="lat" label="Latitude" value="32.253" />
                  <TextField id="lng" label="Longitude" value="-110.912" />
                  <SelectField id="distance" label="Distance in Miles" value="10" />
                  <SelectField id="type" label="Cache Type" value="Any" />
                  <SelectField id="difficulty" label="Difficulty" value="All" />
                  <button type="submit" className="mt-0.5 h-[58px] rounded-lg bg-white px-[23px] text-[26px] text-[#808080]">Submit</button>
                </form>
                <section className="mt-7 flex h-[166px] items-center gap-8 rounded-lg border-2 border-[#dcdcdc] bg-[#b0efed] pl-[42px] text-[#fffff0] shadow-[inset_0_2px_3px_rgba(0,0,0,0.06)]">
                  <svg width="35" height="48" viewBox="0 0 35 48" fill="currentColor" aria-hidden="true" className="-mt-1">
                    <path fillRule="evenodd" d="M17.500 0A17.500 17.500 0 0 1 35 17.500C35 28 26 34 17.500 48C9 34 0 28 0 17.500A17.500 17.500 0 0 1 17.500 0ZM17.500 8A9.200 9.200 0 1 0 17.500 26.400A9.200 9.200 0 1 0 17.500 8Z" />
                  </svg>
                  <h2 className="mt-2 text-[46px] leading-[52px] font-bold">Locations</h2>
                </section>
              </div>
              <MapPanel />
            </div>
          </div>
        </main>
        <div className="w-[30px] shrink-0 border-l-2 border-[#e8e8e8] bg-[#fafafa] pt-1.5 pl-1.5" aria-hidden="true">
          <div className="h-[452px] w-4 rounded-full bg-[#c1c1c1]" />
        </div>
      </div>
    </div>
  );
}
